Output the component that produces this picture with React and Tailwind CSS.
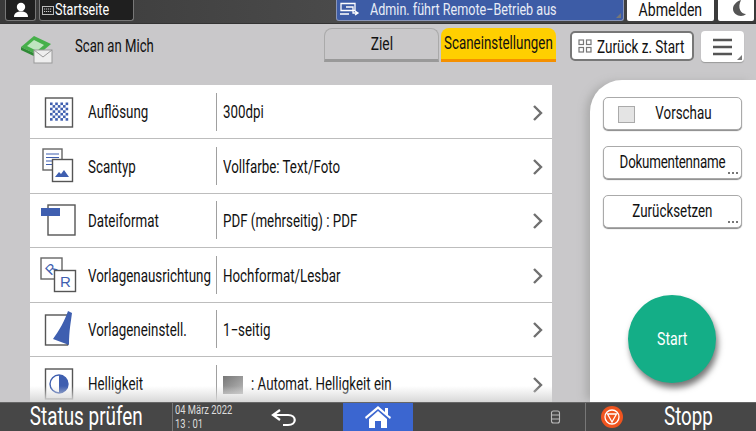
import { useState } from "react";

const font = "font-['Roboto','Liberation_Sans',sans-serif]";

// the panel font is a narrow one, none is installed, so squeeze Roboto
function Narrow({ children, left }) {
  return (
    <span className={left ? "inline-block whitespace-nowrap scale-x-[0.75] origin-left" : "inline-block whitespace-nowrap scale-x-[0.75] origin-center"}>
      {children}
    </span>
  );
}

function ResolutionIcon() {
  const cells = [];
  for (let r = 0; r < 7; r++) {
    for (let c = 0; c < 7; c++) {
      if ((r + c) % 2 === 0) cells.push(<rect key={r + "-" + c} x={6 + c * 2.6} y={7.5 + r * 2.6} width="2.6" height="2.6" fill="#3f5fb0" />);
    }
  }
  return (
    <svg width="30" height="34" viewBox="0 0 30 34">
      <rect x="1.500" y="3" width="27" height="29" fill="#fff" stroke="#555" strokeWidth="1.400" />
      {cells}
    </svg>
  );
}

function ScanTypeIcon() {
  return (
    <svg width="34" height="36" viewBox="0 0 34 36">
      <rect x="1" y="1" width="19" height="21" fill="#fff" stroke="#666" strokeWidth="1.400" />
      <path d="M4 6h13M4 9.500h13M4 13h9M4 16.500h6" stroke="#3f5fb0" strokeWidth="1.200" />
      <rect x="10.500" y="11.500" width="20" height="22" fill="#fff" stroke="#555" strokeWidth="1.400" />
      <path d="M13 29l4-5 2 2 3-4 5 7z" fill="#3f5fb0" />
    </svg>
  );
}

function FileFormatIcon() {
  return (
    <svg width="36" height="34" viewBox="0 0 36 34">
      <rect x="7" y="2" width="27" height="30" fill="#fff" stroke="#555" strokeWidth="1.400" />
      <rect x="0" y="5" width="19" height="8" fill="#3f5fb0" />
    </svg>
  );
}

function OrientationIcon() {
  return (
    <svg width="38" height="36" viewBox="0 0 38 36">
      <rect x="1" y="1" width="21" height="21" fill="#fff" stroke="#666" strokeWidth="1.400" />
      <text x="6" y="17" fontSize="14" fill="#3f5fb0" fontFamily="Liberation Sans" transform="rotate(-45 11 12)">R</text>
      <rect x="14.500" y="13.500" width="21" height="21" fill="#fff" stroke="#555" strokeWidth="1.400" />
      <text x="20" y="30" fontSize="15" fill="#3f5fb0" fontFamily="Liberation Sans">R</text>
    </svg>
  );
}

function OriginalIcon() {
  return (
    <svg width="30" height="38" viewBox="0 0 30 38">
      <rect x="1.500" y="5" width="22" height="30" fill="#fff" stroke="#555" strokeWidth="1.400" />
      <path d="M24 1l4 2c-1 8-3 18-3 32L9 29C15 21 21 10 24 1z" fill="#3f5fb0" />
    </svg>
  );
}

function BrightnessIcon() {
  return (
    <svg width="30" height="34" viewBox="0 0 30 34">
      <rect x="1.500" y="2" width="27" height="30" fill="#fff" stroke="#555" strokeWidth="1.400" />
      <circle cx="15" cy="17" r="9" fill="#fff" stroke="#3f5fb0" strokeWidth="1.400" />
      <path d="M15 8a9 9 0 0 1 0 18z" fill="#3f5fb0" />
    </svg>
  );
}

const rows = [
  { label: "Auflösung", value: "300dpi", icon: <ResolutionIcon /> },
  { label: "Scantyp", value: "Vollfarbe: Text/Foto", icon: <ScanTypeIcon /> },
  { label: "Dateiformat", value: "PDF (mehrseitig) : PDF", icon: <FileFormatIcon /> },
  { label: "Vorlagenausrichtung", value: "Hochformat/Lesbar", icon: <OrientationIcon /> },
  { label: "Vorlageneinstell.", value: "1−seitig", icon: <OriginalIcon /> },
  { label: "Helligkeit", value: ": Automat. Helligkeit ein", icon: <BrightnessIcon />, swatch: true },
];

function Corner() {
  return <span className="absolute right-[2px] bottom-[2px] w-0 h-0 border-l-[5px] border-l-transparent border-b-[5px] border-b-[#777]"></span>;
}

function Row({ row }) {
  return (
    <div className="h-[54.4px] shrink-0 flex items-center bg-white border-b border-[#bdbdbd]">
      <div className="w-[58px] flex justify-center shrink-0">{row.icon}</div>
      <div className="w-[128px] pt-[2px] text-[17.800px] text-[#111] shrink-0 whitespace-nowrap">
        <Narrow left>{row.label}</Narrow>
      </div>
      <div className="w-px h-[38px] bg-[#a0a0a0] shrink-0"></div>
      <div className="flex-1 pl-[6px] pt-[2px] flex items-center gap-[8px] text-[17.800px] text-[#111] whitespace-nowrap">
        {row.swatch && <span className="w-[20px] h-[18px] bg-gradient-to-br from-[#777] to-[#bbb]"></span>}
        <Narrow left>{row.value}</Narrow>
      </div>
      <svg width="12" height="18" viewBox="0 0 12 18" className="mr-[8px] mt-[2px]">
        <path d="M2 2l7 7-7 7" fill="none" stroke="#707070" strokeWidth="2.400" />
      </svg>
    </div>
  );
}

function SideButton({ children, dots }) {
  return (
    <button className="relative w-[139px] h-[33px] bg-white border border-[#aaa] rounded-[5px] shadow-[0_1px_1px_#888] flex items-center justify-center text-[17.800px] text-[#111] whitespace-nowrap">
      {children}
      {dots && <span className="absolute right-[3px] bottom-[4px] flex gap-[2px]"><i className="w-[2px] h-[2px] bg-[#777]"></i><i className="w-[2px] h-[2px] bg-[#777]"></i><i className="w-[2px] h-[2px] bg-[#777]"></i></span>}
    </button>
  );
}

export default function App() {
  const [tab, setTab] = useState("scan");
  return (
    <div className={"w-[756px] h-[431px] flex flex-col overflow-hidden bg-[#c9c8ca] " + font}>
      {/* top bar */}
      <div className="h-[24px] shrink-0 flex items-start bg-gradient-to-r from-[#3a3a3a] via-[#4c4c4c] to-[#3a3a3a] border-b border-[#333]">
        <div className="ml-[5px] w-[31px] h-[21px] bg-[#1f1f1f] border border-[#777] border-t-0 rounded-b-[3px] flex items-center justify-center">
          <svg width="16" height="16" viewBox="0 0 16 16"><circle cx="8" cy="5" r="4.200" fill="#fff" /><path d="M1 15c0-4 3-5.500 7-5.500s7 1.500 7 5.500z" fill="#fff" /></svg>
        </div>
        <div className="ml-[3px] w-[95px] h-[21px] bg-[#1f1f1f] border border-[#777] border-t-0 rounded-b-[3px] flex items-center pl-[2px] gap-[1px] text-[16.800px] text-white">
          <svg width="12" height="9" viewBox="0 0 12 9" className="shrink-0"><rect x=".5" y=".5" width="11" height="8" fill="none" stroke="#bbb" /><path d="M2 3h8M2 5.500h8" stroke="#ccc" strokeDasharray="1.200 .8" /></svg>
          <Narrow left>Startseite</Narrow>
        </div>
        <div className="relative ml-[202px] w-[288px] h-[21px] bg-[#3d5ca6] border border-[#8a96b8] border-t-0 rounded-b-[3px] flex items-center text-[16.800px] text-[#e8ecf6]">
          <svg width="22" height="16" viewBox="0 0 22 16" className="ml-[2px] shrink-0">
            <path d="M2 1.500h14v7H2zM1 12h9" fill="none" stroke="#fff" strokeWidth="1.300" />
            <path d="M7 5h7v6h5m-3-2l3 2-3 2" fill="none" stroke="#fff" strokeWidth="1.300" />
          </svg>
          <span className="ml-[9px]"><Narrow left>Admin. führt Remote−Betrieb aus</Narrow></span>
          <Corner />
        </div>
        <div className="ml-[3px] w-[87px] h-[21px] bg-white rounded-b-[2px] flex items-center justify-center text-[18.800px] text-[#111]">
          <Narrow>Abmelden</Narrow>
        </div>
        <div className="ml-[4px] w-[36px] h-[21px] bg-white rounded-b-[2px] flex items-start justify-center pl-[8px]">
          <svg width="14" height="17" viewBox="0 0 14 17"><path d="M8 0C2 2 0 6 0 9c0 4 4 7 8 7 2 0 4-1 5-2C8 14 4 8 8 0z" fill="#555" /></svg>
        </div>
      </div>

      {/* title row */}
      <div className="h-[60px] shrink-0 flex items-start relative">
        <svg width="36" height="30" viewBox="0 0 36 30" className="ml-[19px] mt-[10px] shrink-0">
          <path d="M2 13L15 2l17 8-13 11z" fill="#46b04a" />
          <path d="M2 13l0 3 17 8 0-3z" fill="#2e8a35" />
          <path d="M8 12l7-6 10 5-7 6z" fill="#bfe5bf" />
          <rect x="15" y="16" width="18" height="13" fill="#eee" stroke="#999" />
          <path d="M15 16l9 7 9-7" fill="none" stroke="#999" />
        </svg>
        <div className="ml-[20px] mt-[9px] text-[18.500px] text-[#111]"><span className="inline-block whitespace-nowrap scale-x-[0.71] origin-left">Scan an Mich</span></div>
        <button onClick={() => setTab("ziel")} className="absolute left-[324px] top-[4px] w-[115px] h-[34px] bg-[#c9c8ca] border border-[#aaa] border-b-[3px] border-b-[#999] rounded-t-[8px] text-[18.400px] text-[#111]"><Narrow>Ziel</Narrow></button>
        <button onClick={() => setTab("scan")} className="absolute left-[441px] top-[4px] w-[115px] h-[34px] bg-[#ffcf00] border-b-[3px] border-[#f59000] rounded-t-[8px] flex items-center justify-center text-[17.800px] text-[#111]"><Narrow>Scaneinstellungen</Narrow></button>
        <button className="absolute left-[570px] top-[7px] w-[124px] h-[30px] bg-white border-2 border-[#777] rounded-[5px] flex items-center pl-[6px] gap-[5px] text-[18px] text-[#111]">
          <svg width="14" height="14" viewBox="0 0 14 14" fill="none" stroke="#777" strokeWidth="1.200" className="shrink-0"><rect x="1" y="1" width="4.500" height="4.500" /><rect x="8.500" y="1" width="4.500" height="4.500" /><rect x="1" y="8.500" width="4.500" height="4.500" /><rect x="8.500" y="8.500" width="4.500" height="4.500" /></svg>
          <Narrow left>Zurück z. Start</Narrow>
        </button>
        <button className="absolute left-[701px] top-[7px] w-[43px] h-[31px] bg-white rounded-[4px] shadow-[0_1px_1px_#999] flex items-center justify-center">
          <svg width="22" height="18" viewBox="0 0 22 18"><path d="M1 2h19M1 9h19M1 16h19" stroke="#555" strokeWidth="2.400" /></svg>
          <Corner />
        </button>
      </div>

      {/* main */}
      <div className="flex-1 min-h-0 flex">
        <div className="relative w-[522px] ml-[30px] pt-[1px] flex flex-col overflow-hidden">
          {rows.map((r) => <Row key={r.label} row={r} />)}
          <div className="absolute left-0 right-0 bottom-0 h-[16px] bg-gradient-to-b from-transparent to-[#d8d8d8]"></div>
        </div>
        <div className="w-[38px]"></div>
        <div className="flex-1 h-[calc(100%+4px)] -mt-[4px] bg-white rounded-tl-[32px] shadow-[-6px_0_8px_-2px_#aaa] flex flex-col items-start pl-[13px] pt-[17px] gap-[16px]">
          <SideButton>
            <span className="absolute left-[14px] top-[8px] w-[17px] h-[17px] bg-[#e4e4e4] border border-[#aaa]"></span>
            <span className="ml-[22px]"><Narrow>Vorschau</Narrow></span>
          </SideButton>
          <SideButton dots><span className="tracking-[-0.3px]"><Narrow>Dokumentenname</Narrow></span></SideButton>
          <SideButton dots><Narrow>Zurücksetzen</Narrow></SideButton>
          <div className="ml-[25px] mt-[51px] w-[88px] h-[88px] rounded-full bg-[#14ae87] shadow-[2px_5px_6px_#777] flex items-center justify-center text-[18.800px] text-white"><Narrow>Start</Narrow></div>
        </div>
      </div>

      {/* bottom bar */}
      <div className="h-[29px] shrink-0 flex items-center bg-[#474747] border-t border-[#666] text-white">
        <div className="w-[172px] text-center text-[25.200px]"><Narrow>Status prüfen</Narrow></div>
        <div className="w-px h-full bg-[#777]"></div>
        <div className="w-[90px] pl-[2px] text-[12.500px] leading-[14px] text-[#ddd] flex flex-col">
          <div className="h-[14px] leading-[14px]"><Narrow left>04 März 2022</Narrow></div>
          <div className="h-[14px] leading-[14px]"><Narrow left>13 : 01</Narrow></div>
        </div>
        <svg width="30" height="22" viewBox="0 0 30 22" className="ml-[7px]">
          <path d="M10 4L3 9l7 5M3 9h15c9 0 9 10 0 10h-5" fill="none" stroke="#fff" strokeWidth="2.200" />
        </svg>
        <div className="ml-[43px] w-[70px] h-full bg-[#3b66d0] flex items-center justify-center">
          <svg width="28" height="24" viewBox="0 0 28 24">
            <path d="M1 12L14 1l7 6V3h3v7l3 2-1 2L14 4 2 14z" fill="#fff" />
            <path d="M5 14l9-8 9 8v9h-6v-7h-6v7H5z" fill="#fff" />
          </svg>
        </div>
        <svg width="11" height="14" viewBox="0 0 11 14" className="ml-[137px]" fill="none" stroke="#bbb" strokeWidth="1.100">
          <rect x="1.500" y="1" width="8" height="12" rx="2" />
          <path d="M1.500 5h8M1.500 9h8" />
        </svg>
        <div className="ml-[24px] w-px h-full bg-[#777]"></div>
        <div className="ml-[15px] w-[22px] h-[22px] rounded-full bg-[#f0541e] flex items-center justify-center shrink-0">
          <svg width="16" height="16" viewBox="0 0 16 16" fill="none" stroke="#fff" strokeWidth="1.300"><circle cx="8" cy="8" r="7" /><path d="M3.500 5h9L8 13z" /></svg>
        </div>
        <div className="ml-[41px] text-[25px]"><Narrow left>Stopp</Narrow></div>
      </div>
    </div>
  );
}
